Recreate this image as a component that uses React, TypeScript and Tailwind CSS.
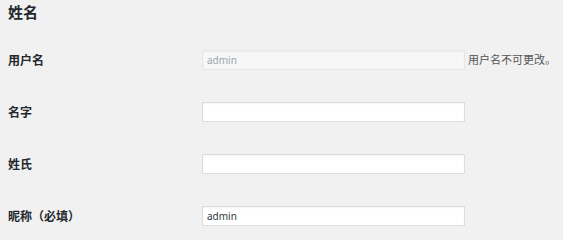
import React from "react";

type Field = {
  label: string;
  value: string;
  disabled?: boolean;
  note?: string;
};

const fields: Field[] = [
  { label: "用户名", value: "admin", disabled: true, note: "用户名不可更改。" },
  { label: "名字", value: "" },
  { label: "姓氏", value: "" },
  { label: "昵称（必填）", value: "admin" },
];

export default function App() {
  return (
    <div
      className="min-h-screen w-full bg-[#f1f1f1] px-2 text-[#23282d]"
      style={{ fontFamily: '"Noto Sans", "Noto Sans CJK SC", sans-serif' }}
    >
      <h2 className="pt-[2px] text-[15px] font-bold leading-[20px]">姓名</h2>

      <div className="mt-[12px] flex flex-col">
        {fields.map((f) => (
          <div key={f.label} className="flex h-[52px] items-center">
            <label className="w-[194px] shrink-0 pt-[2px] text-[12px] font-bold leading-none">
              {f.label}
            </label>
            <input
              type="text"
              readOnly
              disabled={f.disabled}
              value={f.value}
              className={
                "h-[20px] w-[263px] shrink-0 border px-[4px] text-[10px] shadow-[inset_0_1px_2px_rgba(0,0,0,0.05)] outline-none " +
                (f.disabled
                  ? "border-[#e6e6e6] bg-[#f7f7f7] text-[#a0a5aa]"
                  : "border-[#dddddd] bg-white text-[#32373c]")
              }
            />
            {f.note && (
              <span className="ml-[3px] whitespace-nowrap text-[11px] text-[#555555]">{f.note}</span>
            )}
          </div>
        ))}
      </div>
    </div>
  );
}
